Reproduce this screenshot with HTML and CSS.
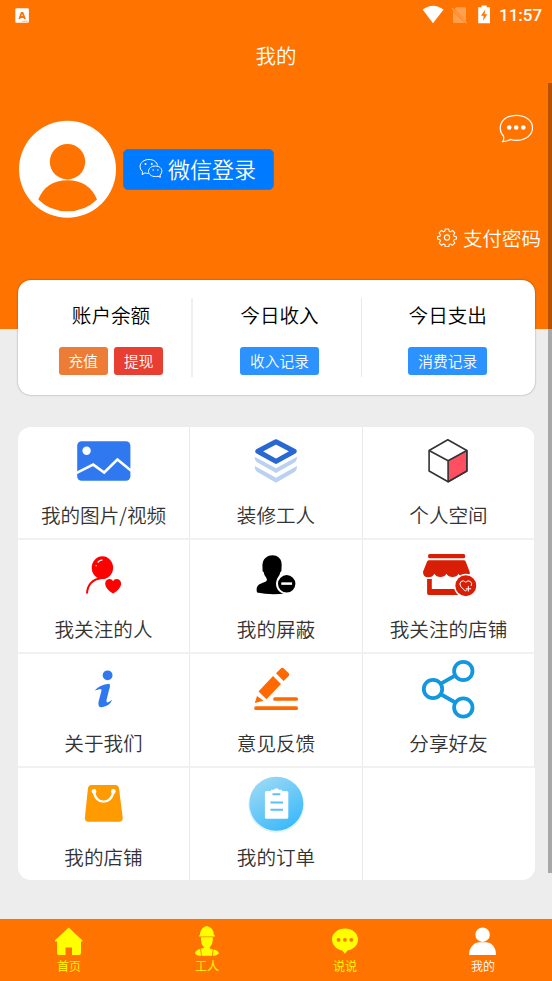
FILE: index.html
```html
<!DOCTYPE html>
<html lang="zh-CN">
<head>
<meta charset="utf-8">
<title>我的</title>
<link rel="stylesheet" href="styles.css">
</head>
<body>
<div class="app">
  <header class="header">
    <div class="status">
      <svg class="status-app" width="14" height="15" viewBox="15 7 14 15"><rect x="15.3" y="7.3" width="13.6" height="14.5" rx="1.2" fill="#fff"/><path d="M19.3 18l2.3-6.2h1L24.9 18M20.3 16h3.7" fill="none" stroke="#ff7300" stroke-width="1.8"/><path d="M22 20.3h6" stroke="#ffb980" stroke-width="1"/></svg>
      <svg width="72" height="22" viewBox="421 4 72 22">
        <path d="M422.6 9.6Q433 2 443.6 9.6L433 23.2z" fill="#fff"/>
        <path d="M456 7.200h9q1 0 1 1v13L454.500 9zM453 11.300L464.800 23H454q-1 0-1-1z" fill="#ffa050"/>
        <path d="M452 8.300L466.500 23.300" stroke="#ffa050" stroke-width="1.300"/>
        <path d="M481.500 5.500h5.200v1.700h3.300v16h-11.800v-16h3.300z" fill="#fff"/>
        <path d="M485.300 9.500l-4.300 6.300h2.700l-.7 5 4.300-6.500h-2.700z" fill="#ff7300"/>
      </svg>
      <span class="time">11:57</span>
    </div>
    <h1 class="title">我的</h1>
    <div class="profile">
      <svg class="avatar" width="98" height="98" viewBox="18 120 98 98"><circle cx="67.500" cy="169.300" r="48.500" fill="#fff"/><circle cx="67.500" cy="161.700" r="17.700" fill="#ff7300"/><path d="M38.300 199.500Q46 180.300 67.500 180.300T97 199.500Q85 211.300 67.500 211.300T38.300 199.500z" fill="#ff7300"/></svg>
      <button class="login">
        <svg width="24" height="22" viewBox="139 159 24 22" fill="none" stroke="#fff" stroke-width="1"><path d="M148.500 174.500q-2 0-3.600-.6l-2.700 1.700.3-3Q139.800 170.300 140 167.300C140.300 163.500 144 160.500 149 160.500c4.500 0 8 2.500 8.600 6"/><path d="M155.500 167c4 0 6.400 2.500 6.400 5.200q0 2.300-1.900 3.900l.3 2.200-2.300-1.100q-1.200.4-2.500.4c-4 0-7-2.300-7-5.300s3-5.300 7-5.300z"/><g fill="#fff" stroke="none"><circle cx="145.500" cy="165" r="1"/><circle cx="151.800" cy="165" r="1"/><circle cx="153.200" cy="171" r=".8"/><circle cx="157.900" cy="171" r=".8"/></g></svg>
        <span>微信登录</span>
      </button>
      <svg class="chat" width="36" height="30" viewBox="498 113 36 30"><path d="M503.500 136.200Q500 132.500 500.300 127.500C500.600 120 507.500 115.300 516.300 115.300S532.500 120.300 532.500 127.800C532.500 135 526 140.300 516.300 140.300q-3.300 0-6-.9-3 2-7.600 2.200 1.500-2 .8-5.400z" fill="none" stroke="#fff" stroke-width="1.200"/><g fill="#fff"><circle cx="509.200" cy="127.500" r="2.300"/><circle cx="516.200" cy="127.500" r="2.300"/><circle cx="523.300" cy="127.500" r="2.300"/></g></svg>
    </div>
    <div class="password">
      <svg width="20" height="20" viewBox="-10 -10.500 20 20" fill="none" stroke="#fff" stroke-width="1.100" stroke-linejoin="round"><path transform="scale(.95)" d="M-1.800-9h3.600l.5 2.400 1.400.6 2.100-1.400 2.500 2.500-1.400 2.100.6 1.400 2.400.5v2.600l-2.400.5-.6 1.400 1.400 2.100-2.500 2.500-2.100-1.400-1.400.6-.5 2.400h-3.600l-.5-2.400-1.400-.6-2.100 1.400-2.500-2.500 1.400-2.100-.6-1.400-2.400-.5v-2.600l2.400-.5.600-1.400-1.400-2.100 2.500-2.500 2.100 1.400 1.400-.6z"/><circle r="2.600"/></svg>
      <span>支付密码</span>
    </div>
  </header>

  <main class="content">
    <section class="stats">
      <div class="stat"><div class="stat-name">账户余额</div><div class="actions"><button class="tag orange">充值</button><button class="tag red">提现</button></div></div>
      <div class="stat"><div class="stat-name">今日收入</div><div class="actions"><button class="tag">收入记录</button></div></div>
      <div class="stat"><div class="stat-name">今日支出</div><div class="actions"><button class="tag">消费记录</button></div></div>
    </section>

    <section class="menu">
      <div class="item">
        <svg viewBox="74.300 426 60 70"><rect x="77.500" y="441.300" width="53.200" height="39.500" rx="4.500" fill="#2f78f0"/><circle cx="86.900" cy="450.700" r="4.200" fill="#fff"/><path d="M77 472.800L93.500 464.600 104.500 472.500 117.700 459.500 131.500 470.700" fill="none" stroke="#fff" stroke-width="2.600"/></svg>
        <span>我的图片/视频</span>
      </div>
      <div class="item">
        <svg viewBox="246 426 60 70"><path d="M254.700 456.700Q254.700 461 257.500 462.500L276 473 294.500 462.500Q297 461 297 456.700L276 468.300zM254.700 466Q254.700 470.500 257.500 472L276 482.800 294.500 472Q297 470.500 297 466L276 477.700z" fill="#bbd1f1"/><path d="M257.800 451.300L276 441.700 294.200 451.300 276 461.400z" fill="none" stroke="#2968d3" stroke-width="5" stroke-linejoin="round"/></svg>
        <span>装修工人</span>
      </div>
      <div class="item">
        <svg viewBox="419.200 426 60 70" stroke="#333" stroke-width="1.600" stroke-linejoin="round"><path d="M429.300 450.500L448 439.700 467 450.500V471L448.300 481.700 429.300 471z" fill="#fff"/><path d="M448.300 460.700L467 450.500V471L448.300 481.700z" fill="#ff4f60"/><path d="M429.300 450.500L448.300 460.700" fill="none"/></svg>
        <span>个人空间</span>
      </div>
      <div class="item">
        <svg viewBox="74.300 540 60 70"><ellipse cx="102.700" cy="567.700" rx="10.700" ry="11.400" fill="#f00"/><path d="M87.300 593.500Q88 580 102 578" fill="none" stroke="#f00" stroke-width="2"/><path d="M96.500 566.300v-1M98 562.500Q99.500 560.400 102.700 559.900" fill="none" stroke="#fff" stroke-width="1.300"/><path d="M113.400 593.500C109 591 105.400 587 105.500 583.500c.1-4.500 5.800-6.100 7.900-2.200 2.100-3.900 7.900-2.300 8 2.200.1 3.500-3.600 7.500-8 10z" fill="#f00"/></svg>
        <span>我关注的人</span>
      </div>
      <div class="item">
        <svg viewBox="246 540 60 70"><path d="M257 592.500Q255.600 587 259 584.500 262 583 266 581.500q1.800-1.300.4-3.500-2.400-2.700-2.700-5.700-1.700-1.500-1.200-4C261.500 558 268 555.300 272.500 555.300S283 558 281.500 568.300q.5 2.500-1.200 4-.5 3-2.700 5.700-1.300 2.200.4 3.500 4 1 7 3l1 9Q270 595.500 257 592.500z"/><circle cx="286.700" cy="583.800" r="9.700" stroke="#fff" stroke-width="2"/><path d="M281.300 583.600h10.800" stroke="#fff" stroke-width="2.500"/></svg>
        <span>我的屏蔽</span>
      </div>
      <div class="item">
        <svg viewBox="419.200 540 60 70"><g fill="#d91e06"><rect x="428.300" y="554" width="37" height="4.300" rx="1.500"/><path d="M429 560.300h35.500q1 0 1.500 1.500l4 10.500q.4 5-5.500 5-4 0-5.700-3.500-2 3.300-6 3.300t-6.200-3.300q-2 3.300-6 3.300t-6-3.300q-2 3.500-6 3.500-5.500 0-5.400-5.500l4-10q.5-1.500 1.800-1.500z"/><path d="M427.300 579h4.700v10h27v6h-30q-1.700 0-1.700-1.700z"/></g><circle cx="466" cy="585.700" r="11.200" fill="#d91e06" stroke="#fff" stroke-width="1.500"/><path d="M467.500 589.500l-2 1.500-4.500-4.300q-2-3 .3-5.200 2.600-1.800 4.700.8 2-2.600 4.700-.8 2 2 .6 4.500M468.500 586v5.500M466 588.800h5.300" fill="none" stroke="#fff" stroke-width="1"/></svg>
        <span>我关注的店铺</span>
      </div>
      <div class="item">
        <svg viewBox="74.300 654 60 70" fill="#2f78f0"><circle cx="107.900" cy="675.300" r="4.900"/><path d="M95 690.500Q99.500 685 109.700 683.800 111 686 109.300 690L106.800 700q-.4 2.500 1 2.400 2-.6 4.700-2.600-2.500 6.400-10.500 7.500-4 .4-3.200-5.300l3-11.500q.3-1.500-1.300-1.500-2.500.5-5.500 1.500z"/></svg>
        <span>关于我们</span>
      </div>
      <div class="item">
        <svg viewBox="246 654 60 70" fill="#ff6900"><path d="M273 676L281 684 266.500 699.200 258.500 691.500zM276 673.300L281 668.300q1.300-1 2.600 0l5.200 5q1 1.300 0 2.600L283.600 681zM257 696l6.600 4.700-8.800 2.300z"/><path d="M275 699h21.200M256 708.200h40.200" fill="none" stroke="#ff6900" stroke-width="3.700" stroke-linecap="round"/></svg>
        <span>意见反馈</span>
      </div>
      <div class="item">
        <svg viewBox="419.200 654 60 70" fill="none" stroke="#1397df" stroke-width="3.800"><circle cx="433.200" cy="689" r="9.200"/><circle cx="463.500" cy="671" r="9.200"/><circle cx="463.500" cy="707.500" r="9.200"/><path d="M441.500 683.300L455.500 675.500M441.500 694.500L455.500 702.500"/></svg>
        <span>分享好友</span>
      </div>
      <div class="item">
        <svg viewBox="74 768 60 70"><path d="M91.500 785h24q3 0 3.500 3.500l3.700 29q.3 4.200-3.500 4.200H88.500q-4 0-3.600-4.200l3-29q.5-3.500 3.600-3.500z" fill="#ff9a00"/><path d="M94 791.500C95 805 112 805 113.300 791.500" fill="none" stroke="#fff" stroke-width="2.400"/><circle cx="94" cy="791.500" r="2.400" fill="#fff"/><circle cx="113.300" cy="791.500" r="2.400" fill="#fff"/></svg>
        <span>我的店铺</span>
      </div>
      <div class="item">
        <svg viewBox="246 768 60 70"><defs><linearGradient id="disc" x1=".15" y1=".1" x2=".7" y2="1"><stop offset="0" stop-color="#98d8f5"/><stop offset="1" stop-color="#3bb9fa"/></linearGradient></defs><circle cx="276.300" cy="804.700" r="28" fill="#def3fd"/><circle cx="276.300" cy="803.700" r="27" fill="url(#disc)"/><path d="M266.500 791h4.500v-1.300h3q.5-1.500 2.500-1.500t2.500 1.500h3v1.300h4.700q1.600 0 1.600 1.600v24.600q0 1.600-1.600 1.600h-20.200q-1.600 0-1.600-1.600v-24.600q0-1.600 1.600-1.600z" fill="#fff"/><path d="M272.500 794.200h7.800M270.500 802.500h12.500M270.500 809.800h12.500" stroke="#58c2f7" stroke-width="2"/></svg>
        <span>我的订单</span>
      </div>
      <div class="item"></div>
    </section>
  </main>

  <nav class="tabs">
    <a class="tab"><svg viewBox="51 925 36 32"><path d="M68.700 927.500L82.300 940.300v1.200H81V953q0 2-2 2H72v-7.500h-6.500v7.500H59q-2 0-2-2V941.500h-2v-1.200z" fill="#ff0"/></svg><span>首页</span></a>
    <a class="tab"><svg viewBox="189 925 36 32"><path d="M199 935.200h.8Q200 929 204.800 926.800q2-1.500 4 0Q213.800 929 214 935.200h1v1.200h-16zM201 937.200h11.800v3q0 4-3 7v1.200q9 1.500 9.200 5-3.500 2.500-5 2.300H200q-3 0-5.200-2.300.7-4.500 9-5.500V947.200q-3-3-2.800-7z" fill="#ff0"/><path d="M200.500 948.500l1 7.500M213.300 948.500l-1 7.500" stroke="#ff7300" stroke-width=".8"/></svg><span>工人</span></a>
    <a class="tab"><svg viewBox="327 925 36 32"><path d="M345 928.500c7.300 0 13 4.700 13 11 0 5.500-4.500 10-10.600 11L345 953.800 342.200 950.500C336.300 949.300 332 945 332 939.500c0-6.300 5.700-11 13-11z" fill="#ff0"/><g fill="#ff7300"><circle cx="338.500" cy="939.800" r="1.900"/><circle cx="344.900" cy="939.800" r="1.900"/><circle cx="351.300" cy="939.800" r="1.900"/></g></svg><span>说说</span></a>
    <a class="tab active"><svg viewBox="465 925 36 32" fill="#fff"><circle cx="482.600" cy="934.700" r="7.200"/><path d="M469 955q0-6 3.500-9.500 3-3.300 7-3.300h6q4.500 0 7.500 3.300 3 3.500 3 9.500z"/></svg><span>我的</span></a>
  </nav>
  <div class="scrollbar"></div>
</div>
</body>
</html>
```
FILE: styles.css
```css
* { box-sizing: border-box; }

body {
  margin: 0;
  background: #ededed;
  font-family: "Noto Sans CJK SC", sans-serif;
  font-weight: 350;
}

svg { display: block; flex: none; }
button { border: 0; font-family: inherit; font-weight: inherit; margin: 0; }

.app {
  position: relative;
  height: 981px;
  display: flex;
  flex-direction: column;
  overflow: hidden;
}

.header {
  height: 328.500px;
  flex: none;
  background: #ff7300;
  color: #fff;
}

.status {
  height: 30px;
  padding: 0 10px 0 15px;
  display: flex;
  align-items: center;
}
.status-app { margin-right: auto; }
.time {
  width: 43px;
  margin-left: 6px;
  font: 500 17px/30px Roboto, sans-serif;
  white-space: nowrap;
}

.title {
  margin: 0;
  height: 50px;
  font-size: 20.500px;
  font-weight: inherit;
  line-height: 50px;
  text-align: center;
}

.profile {
  display: flex;
  align-items: center;
  height: 98px;
  margin-top: 40px;
  padding: 0 18px;
}
.login {
  display: flex;
  align-items: center;
  gap: 5px;
  width: 151px;
  height: 41px;
  margin-left: 7px;
  padding: 0 0 0 15px;
  border: 1px solid #3976bd;
  border-radius: 5px;
  background: #007aff;
  color: #fff;
  font-size: 22px;
  line-height: 38px;
  white-space: nowrap;
}
.login span { height: 40px; }
.chat { align-self: flex-start; margin: -7px 0 0 auto; }

.password {
  display: flex;
  justify-content: flex-end;
  align-items: center;
  gap: 6px;
  height: 38px;
  padding-right: 11px;
  font-size: 19.500px;
}

.content { flex: 1; padding: 0 17px 0 18px; }

.stats {
  display: grid;
  grid-template-columns: 175px 169px 173px;
  height: 115.500px;
  margin-top: -49px;
  padding: 18px 0;
  border-radius: 13px;
  background: #fff;
  box-shadow: 0 0 2px rgba(0, 0, 0, .4);
}
.stat {
  display: flex;
  flex-direction: column;
  align-items: center;
  border-right: 1px solid #e9e9e9;
  padding-left: 13px;
}
.stat + .stat { padding-left: 5px; }
.stat:first-child { border-right: 2px solid #f0f0f0; }
.stat + .stat:last-child { border-right: 0; padding-left: 0; padding-right: 1.500px; }
.stat-name { height: 34px; font-size: 19.600px; line-height: 34px; }
.actions { display: flex; gap: 6px; margin-top: 15px; }
.tag {
  height: 28px;
  padding: 0 10px;
  border-radius: 3px;
  background: #2b92ff;
  color: #fff;
  font-size: 14.700px;
  line-height: 28px;
}
.orange { background: #ed7d36; }
.red { background: #e93e32; }

.menu {
  display: grid;
  grid-template-columns: 172px 173px 172px;
  grid-template-rows: 113px 114px 114px 112px;
  margin-top: 32px;
  border-radius: 13px;
  background: #fff;
  overflow: hidden;
}
.item {
  display: flex;
  flex-direction: column;
  justify-content: flex-end;
  align-items: center;
  min-height: 0;
  border-right: 1px solid #ebebeb;
  border-bottom: 2px solid #f1f1f1;
  color: #333;
  font-size: 19.600px;
}
.item svg { width: 60px; height: 70px; }
.item span { flex: none; height: 42px; line-height: 38px; white-space: nowrap; }
.item:nth-child(n + 10) { border-bottom: 0; }
.item:last-child { border-right: 0; }

.tabs {
  display: grid;
  grid-template-columns: repeat(4, 1fr);
  height: 62px;
  flex: none;
  border-top: 1px solid #c08050;
  background: #ff7300;
}
.tab {
  display: flex;
  flex-direction: column;
  align-items: center;
  padding-top: 5px;
  color: #ff0;
  font-size: 12px;
  line-height: 18px;
}
.tab svg { width: 36px; height: 32px; }
.active { color: #fff; }

.scrollbar {
  position: absolute;
  top: 83px;
  right: 0;
  width: 4px;
  height: 790px;
  background: rgba(0, 0, 0, .29);
}
```
